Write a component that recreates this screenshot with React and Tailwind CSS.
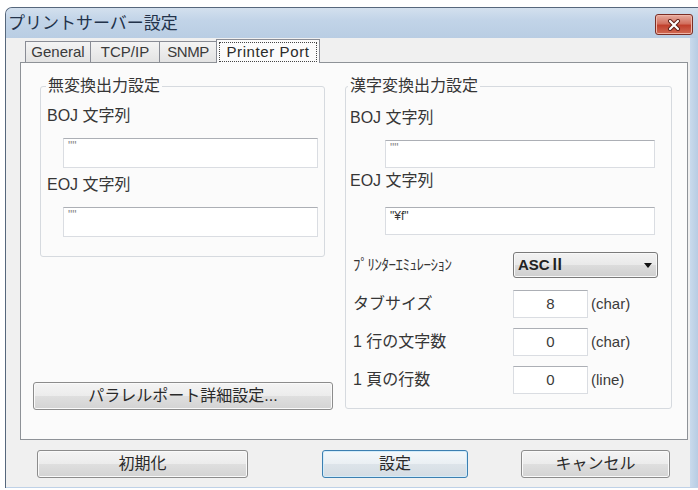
import React from 'react';

const font = "font-['Liberation_Sans','Noto_Sans_CJK_JP',sans-serif]";

function Box({ className = '', children }) {
  return (
    <div className={`border border-[#dadde2] border-t-[#acafb5] bg-white ${className}`}>
      {children}
    </div>
  );
}

function Btn({ className = '', primary = false, children }) {
  return (
    <button
      className={`h-[28px] rounded-[3px] border text-[16px] leading-none text-[#2a2a2a] ${
        primary
          ? 'border-[#3c7fb1] bg-[linear-gradient(#f4f8fb,#eaeff3_50%,#dde4ea_50%,#d4dce3)] shadow-[inset_0_0_0_1px_#d3ecfa]'
          : 'border-[#8c8c8c] bg-[linear-gradient(#f4f4f4,#ececec_50%,#dfdfdf_50%,#d3d3d3)] shadow-[inset_0_0_0_1px_#fafafa]'
      } ${className}`}
    >
      {children}
    </button>
  );
}

function Tab({ className = '', children }) {
  return (
    <div
      className={`h-[21px] -ml-px first:ml-0 flex items-center justify-center border border-b-0 border-[#898c95] bg-[linear-gradient(#f4f4f4,#e3e3e3)] text-[15px] text-[#3a3a3a] ${className}`}
    >
      {children}
    </div>
  );
}

function NumRow({ label, value, unit, className = '' }) {
  return (
    <div className={`flex items-center ${className}`}>
      <div className="w-[167px] pl-[7px] text-[16px] leading-[20px]">{label}</div>
      <Box className="w-[75px] h-[28px] flex items-center justify-center text-[15px] text-[#3a3a3a]">
        {value}
      </Box>
      <span className="ml-[3px] text-[15px] text-[#3a3a3a]">{unit}</span>
    </div>
  );
}

export default function App() {
  return (
    <div className={`w-[698px] h-[490px] bg-white overflow-hidden ${font}`}>
      <div className="ml-[5px] mt-[7px] w-[693px] h-[481px] border-l border-t border-[#56677c] rounded-tl-[7px] bg-[#bed1e7] flex flex-col">
        {/* title bar */}
        <div className="h-[30px] flex items-start rounded-tl-[6px] bg-[linear-gradient(#d3e0ee,#c2d4e8_40%,#b9cde3)]">
          <span className="ml-[2px] mt-[6px] text-[17px] leading-[20px] text-[#22324a]">
            プリントサーバー設定
          </span>
          <div className="ml-auto mr-[5px] mt-[6px] w-[38px] h-[21px] rounded-[3px] border border-[#7b2e25] bg-[linear-gradient(#e6aca0,#d2705f_45%,#c1402d_55%,#d06b55)] flex items-center justify-center shadow-[inset_0_0_0_1px_#efb6a9]">
            <svg width="14" height="12" viewBox="0 0 14 12">
              <path d="M3 2 L11 10 M11 2 L3 10" stroke="#5b1d16" strokeWidth="4" strokeLinecap="round" />
              <path d="M3 2 L11 10 M11 2 L3 10" stroke="#ffffff" strokeWidth="2.2" strokeLinecap="round" />
            </svg>
          </div>
        </div>

        <div className="flex">
          {/* client area */}
          <div className="w-[684px] h-[449px] bg-[#f0f0f0] flex flex-col text-[#363636]">
            {/* tabs */}
            <div className="mt-[1px] ml-[19px] h-[23px] flex items-end">
              <Tab className="w-[66px]">General</Tab>
              <Tab className="w-[70px]">TCP/IP</Tab>
              <Tab className="w-[58px] tracking-[-0.5px]">SNMP</Tab>
              <div className="-ml-px w-[104px] h-[24px] -mb-px relative z-10 flex p-[2px] pb-[1px] border border-b-0 border-[#898c95] bg-[#fbfbfb]">
                <span className="flex-1 flex items-center justify-center border border-dotted border-[#444] text-[15px] tracking-[0.6px] text-[#2a2a2a]">
                  Printer Port
                </span>
              </div>
            </div>

            {/* panel */}
            <div className="ml-[14px] w-[668px] h-[378px] border border-[#8e9297] bg-[#fbfbfb] flex pl-[12px]">
              {/* left column */}
              <div className="w-[300px] flex flex-col">
                <fieldset className="ml-[7px] mt-[14px] w-[285px] border border-[#d6dadf] rounded-[3px] pb-[19px]">
                  <legend className="ml-[5px] px-[2px] text-[16px] leading-[18px]">無変換出力設定</legend>
                  <div className="mt-[11px] pl-[6px] text-[16px] leading-[20px]">BOJ 文字列</div>
                  <Box className="mt-[12px] ml-[22px] w-[255px] h-[30px] pl-[4px] text-[12px] leading-[14px] text-[#888]">
                    ""
                  </Box>
                  <div className="mt-[7px] pl-[6px] text-[16px] leading-[20px]">EOJ 文字列</div>
                  <Box className="mt-[12px] ml-[22px] w-[255px] h-[30px] pl-[4px] text-[12px] leading-[14px] text-[#888]">
                    ""
                  </Box>
                </fieldset>
                <Btn className="mt-auto mb-[29px] w-[300px]">パラレルポート詳細設定...</Btn>
              </div>

              {/* right group */}
              <fieldset className="ml-[12px] mt-[14px] self-start w-[327px] border border-[#d6dadf] rounded-[3px] pb-[14px]">
                <legend className="ml-[2px] px-[2px] text-[16px] leading-[18px]">漢字変換出力設定</legend>
                <div className="mt-[13px] pl-[4px] text-[16px] leading-[20px]">BOJ 文字列</div>
                <Box className="mt-[12px] ml-[39px] w-[270px] h-[28px] pl-[4px] text-[12px] leading-[14px] text-[#888]">
                  ""
                </Box>
                <div className="mt-[3px] pl-[4px] text-[16px] leading-[20px]">EOJ 文字列</div>
                <Box className="mt-[16px] ml-[39px] w-[270px] h-[28px] pl-[4px] pt-[1px] text-[12px] leading-[14px] text-[#333]">
                  "¥f"
                </Box>
                <div className="mt-[17px] flex items-center">
                  <div className="w-[167px] pl-[7px] text-[15px] leading-[20px] tracking-[-0.5px]">ﾌﾟﾘﾝﾀｰｴﾐｭﾚｰｼｮﾝ</div>
                  <div className="w-[145px] h-[26px] rounded-[3px] border border-[#7a7a7a] bg-[linear-gradient(#f2f2f2,#e9e9e9_50%,#dcdcdc_50%,#cfcfcf)] shadow-[inset_0_0_0_1px_#f8f8f8] flex items-center pl-[4px] pr-[5px]">
                    <span className="text-[15px] font-bold text-[#222]">ASCⅡ</span>
                    <svg className="ml-auto" width="8" height="5" viewBox="0 0 8 5">
                      <path d="M0 0 H8 L4 5 Z" fill="#111" />
                    </svg>
                  </div>
                </div>
                <NumRow className="mt-[12px]" label="タブサイズ" value="8" unit="(char)" />
                <NumRow className="mt-[10px]" label="1 行の文字数" value="0" unit="(char)" />
                <NumRow className="mt-[10px]" label="1 頁の行数" value="0" unit="(line)" />
              </fieldset>
            </div>

            {/* dialog buttons */}
            <div className="mt-[10px] flex">
              <Btn className="ml-[31px] w-[211px]">初期化</Btn>
              <Btn primary className="ml-[74px] w-[146px]">設定</Btn>
              <Btn className="ml-[53px] w-[149px]">キャンセル</Btn>
            </div>
          </div>
          <div className="flex-1 bg-[linear-gradient(90deg,#c9daec,#b7cce3)]" />
        </div>
      </div>
    </div>
  );
}
